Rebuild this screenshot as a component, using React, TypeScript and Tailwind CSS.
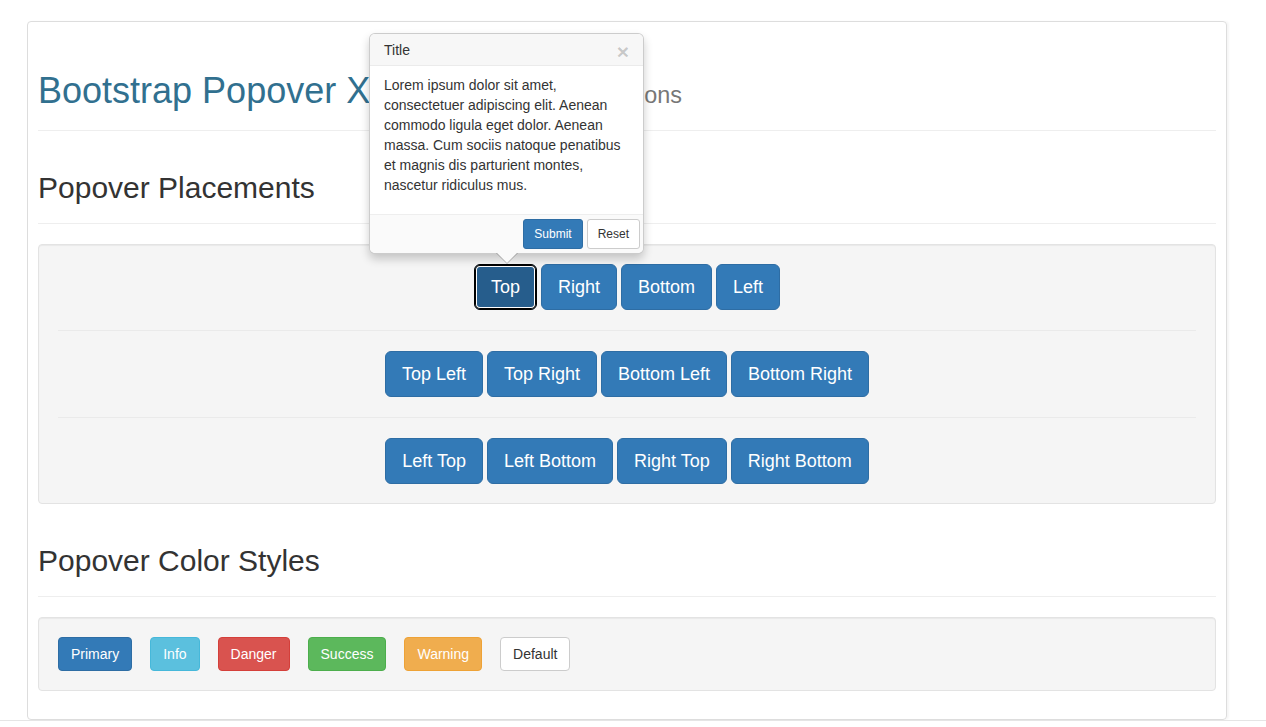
import React from 'react';

const font = "font-['Liberation_Sans','Helvetica_Neue',Arial,sans-serif]";

const lgBtn =
  'rounded-[6px] border border-[#2e6da4] bg-[#337ab7] px-[16px] py-[10px] text-[18px] leading-[24px] text-white';

const placementRows = [
  ['Top', 'Right', 'Bottom', 'Left'],
  ['Top Left', 'Top Right', 'Bottom Left', 'Bottom Right'],
  ['Left Top', 'Left Bottom', 'Right Top', 'Right Bottom'],
];

const colorButtons = [
  { label: 'Primary', cls: 'bg-[#337ab7] border-[#2e6da4] text-white' },
  { label: 'Info', cls: 'bg-[#5bc0de] border-[#46b8da] text-white' },
  { label: 'Danger', cls: 'bg-[#d9534f] border-[#d43f3a] text-white' },
  { label: 'Success', cls: 'bg-[#5cb85c] border-[#4cae4c] text-white' },
  { label: 'Warning', cls: 'bg-[#f0ad4e] border-[#eea236] text-white' },
  { label: 'Default', cls: 'bg-white border-[#ccc] text-[#333]' },
];

function PageHeader({ children, h1 }: { children: React.ReactNode; h1?: boolean }) {
  return (
    <div className="mt-[40px] border-b border-[#eee] pb-[9px]">
      {h1 ? (
        <h1 className="mb-[10px] text-[36px] leading-[39.6px] font-normal text-[#31708f]">{children}</h1>
      ) : (
        <h2 className="mb-[10px] text-[30px] leading-[33px] font-normal text-[#333]">{children}</h2>
      )}
    </div>
  );
}

function Popover() {
  return (
    <div className="absolute left-[369px] top-[33px] w-[275px] rounded-[6px] border border-black/20 bg-white text-[14px] leading-[20px] text-[#333] shadow-[0_5px_10px_rgba(0,0,0,0.2)]">
      <div className="flex h-[32px] items-center justify-between rounded-t-[5px] border-b border-[#ebebeb] bg-[#f7f7f7] px-[14px]">
        <span>Title</span>
        <span className="mt-[3px] text-[21px] leading-none font-bold text-black/20">×</span>
      </div>
      <div className="px-[14px] pt-[9px] pb-[19px]">
        Lorem ipsum dolor sit amet, consectetuer adipiscing elit. Aenean commodo ligula eget dolor.
        Aenean massa. Cum sociis natoque penatibus et magnis dis parturient montes, nascetur
        ridiculus mus.
      </div>
      <div className="flex justify-end gap-[4px] rounded-b-[5px] border-t border-[#eee] bg-[#fafafa] px-[3px] py-[4px]">
        <button className="rounded-[3px] border border-[#2e6da4] bg-[#337ab7] px-[10px] py-[5px] text-[12px] leading-[18px] text-white">
          Submit
        </button>
        <button className="rounded-[3px] border border-[#ccc] bg-white px-[10px] py-[5px] text-[12px] leading-[18px] text-[#333]">
          Reset
        </button>
      </div>
      <div className="absolute left-1/2 top-full -ml-[11px] h-0 w-0 border-x-[11px] border-t-[11px] border-x-transparent border-t-black/25" />
      <div className="absolute left-1/2 top-full -ml-[10px] h-0 w-0 border-x-[10px] border-t-[10px] border-x-transparent border-t-[#fafafa]" />
    </div>
  );
}

export default function App() {
  return (
    <div className={`relative min-h-[727px] bg-white pt-[21px] ${font}`}>
      <div className="ml-[27px] w-[1200px] rounded-[4px] border border-[#ddd] px-[10px] pt-[9px] pb-[8px] shadow-[2px_0_2px_rgba(0,0,0,0.04)]">
        <PageHeader h1>
          Bootstrap Popover X{' '}
          <small className="text-[65%] leading-none text-[#777]">Extended Popover X Options</small>
        </PageHeader>

        <PageHeader>Popover Placements</PageHeader>

        <div className="mt-[20px] rounded-[4px] border border-[#e3e3e3] bg-[#f5f5f5] p-[19px] shadow-[inset_0_1px_1px_rgba(0,0,0,0.05)]">
          {placementRows.map((row, i) => (
            <div key={i}>
              {i > 0 && <div className="my-[20px] border-t border-[#eaeaea]" />}
              <div className="flex justify-center gap-[4px]">
                {row.map((label) =>
                  label === 'Top' ? (
                    <button
                      key={label}
                      className="rounded-[6px] border border-black bg-[#265d8c] px-[16px] py-[10px] text-[18px] leading-[24px] text-white shadow-[inset_0_0_0_1px_#000,inset_0_0_0_2px_#fff]"
                    >
                      {label}
                    </button>
                  ) : (
                    <button key={label} className={lgBtn}>
                      {label}
                    </button>
                  )
                )}
              </div>
            </div>
          ))}
        </div>

        <PageHeader>Popover Color Styles</PageHeader>

        <div className="mt-[20px] mb-[20px] rounded-[4px] border border-[#e3e3e3] bg-[#f5f5f5] p-[19px] shadow-[inset_0_1px_1px_rgba(0,0,0,0.05)]">
          <div className="flex gap-[18px]">
            {colorButtons.map((b) => (
              <button
                key={b.label}
                className={`rounded-[4px] border px-[12px] py-[6px] text-[14px] leading-[20px] ${b.cls}`}
              >
                {b.label}
              </button>
            ))}
          </div>
        </div>
      </div>
      <div className="border-t border-[#e5e5e5]" />

      <Popover />
    </div>
  );
}
